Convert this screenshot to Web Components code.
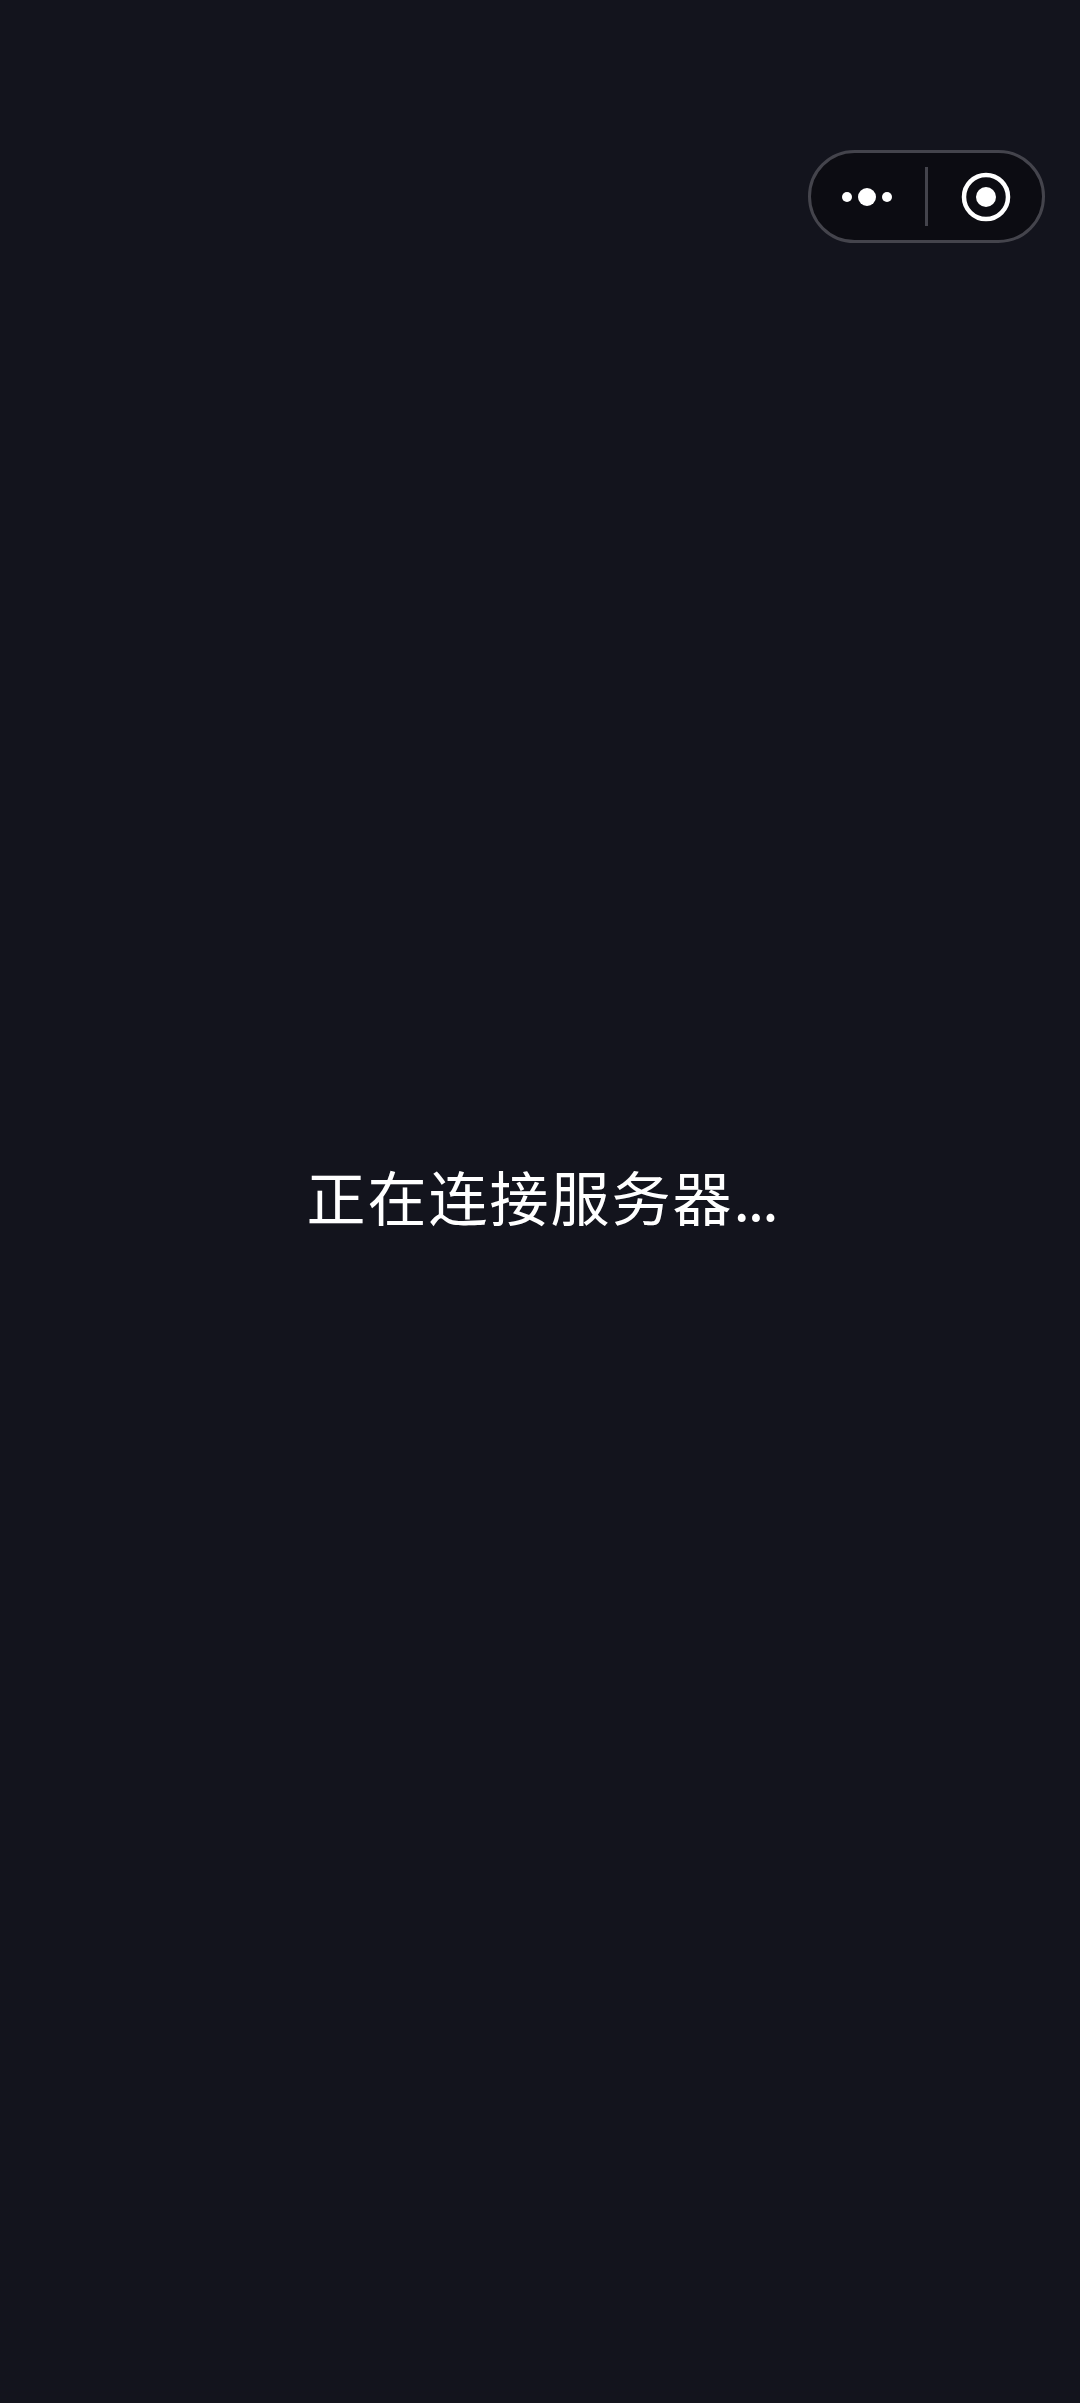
<!DOCTYPE html>
<html lang="zh">
<head>
<meta charset="utf-8">
<title>正在连接服务器</title>
<style>
  html, body { margin: 0; height: 100%; background: #13141d; }
</style>
</head>
<body>
<loading-screen>
  <mini-capsule slot="top"></mini-capsule>
  正在连接服务器<span style="letter-spacing:-2px">...</span>
</loading-screen>
<script>
const capsuleTemplate = document.createElement("template");
capsuleTemplate.innerHTML = `
<style>
  :host {
    display: flex;
    box-sizing: border-box;
    width: 237px;
    height: 93px;
    align-items: center;
    background: #0c0c12;
    border: 3px solid #44444c;
    border-radius: 47px;
  }
  .side {
    flex: 1;
    display: flex;
    align-items: center;
    justify-content: center;
  }
  .divider {
    width: 3px;
    height: 59px;
    background: #44444c;
  }
  svg { display: block; }
</style>
<div class="side">
  <svg width="60" height="24" viewBox="0 0 60 24" fill="#fff">
    <circle cx="9" cy="12" r="5"/>
    <circle cx="29" cy="12" r="9"/>
    <circle cx="49" cy="12" r="5"/>
  </svg>
</div>
<div class="divider"></div>
<div class="side">
  <svg width="52" height="50" viewBox="0 0 52 50" fill="none">
    <circle cx="27" cy="25" r="22" stroke="#fff" stroke-width="4.5"/>
    <circle cx="27" cy="25" r="10" fill="#fff"/>
  </svg>
</div>
`;

class MiniCapsule extends HTMLElement {
  constructor() {
    super();
    const shadowRoot = this.attachShadow({ mode: "open" });
    shadowRoot.appendChild(capsuleTemplate.content.cloneNode(true));
  }
}

const screenTemplate = document.createElement("template");
screenTemplate.innerHTML = `
<style>
  :host {
    display: grid;
    height: 100vh;
    background: #13141d;
    color: #fff;
    font-family: "Noto Sans CJK SC", "Liberation Sans", sans-serif;
  }
  .top, .message { grid-area: 1 / 1; }
  .top {
    display: flex;
    justify-content: flex-end;
    align-items: flex-start;
    padding: 150px 35px 0 0;
  }
  .message {
    align-self: center;
    justify-self: center;
    padding: 0 0 13px 3px;
    font-size: 59px;
    font-weight: 400;
    letter-spacing: 2px;
    line-height: 1;
    white-space: nowrap;
  }
</style>
<div class="top"><slot name="top"></slot></div>
<div class="message"><slot></slot></div>
`;

class LoadingScreen extends HTMLElement {
  constructor() {
    super();
    const shadowRoot = this.attachShadow({ mode: "open" });
    shadowRoot.appendChild(screenTemplate.content.cloneNode(true));
  }
}

window.customElements.define("mini-capsule", MiniCapsule);
window.customElements.define("loading-screen", LoadingScreen);
</script>
</body>
</html>
